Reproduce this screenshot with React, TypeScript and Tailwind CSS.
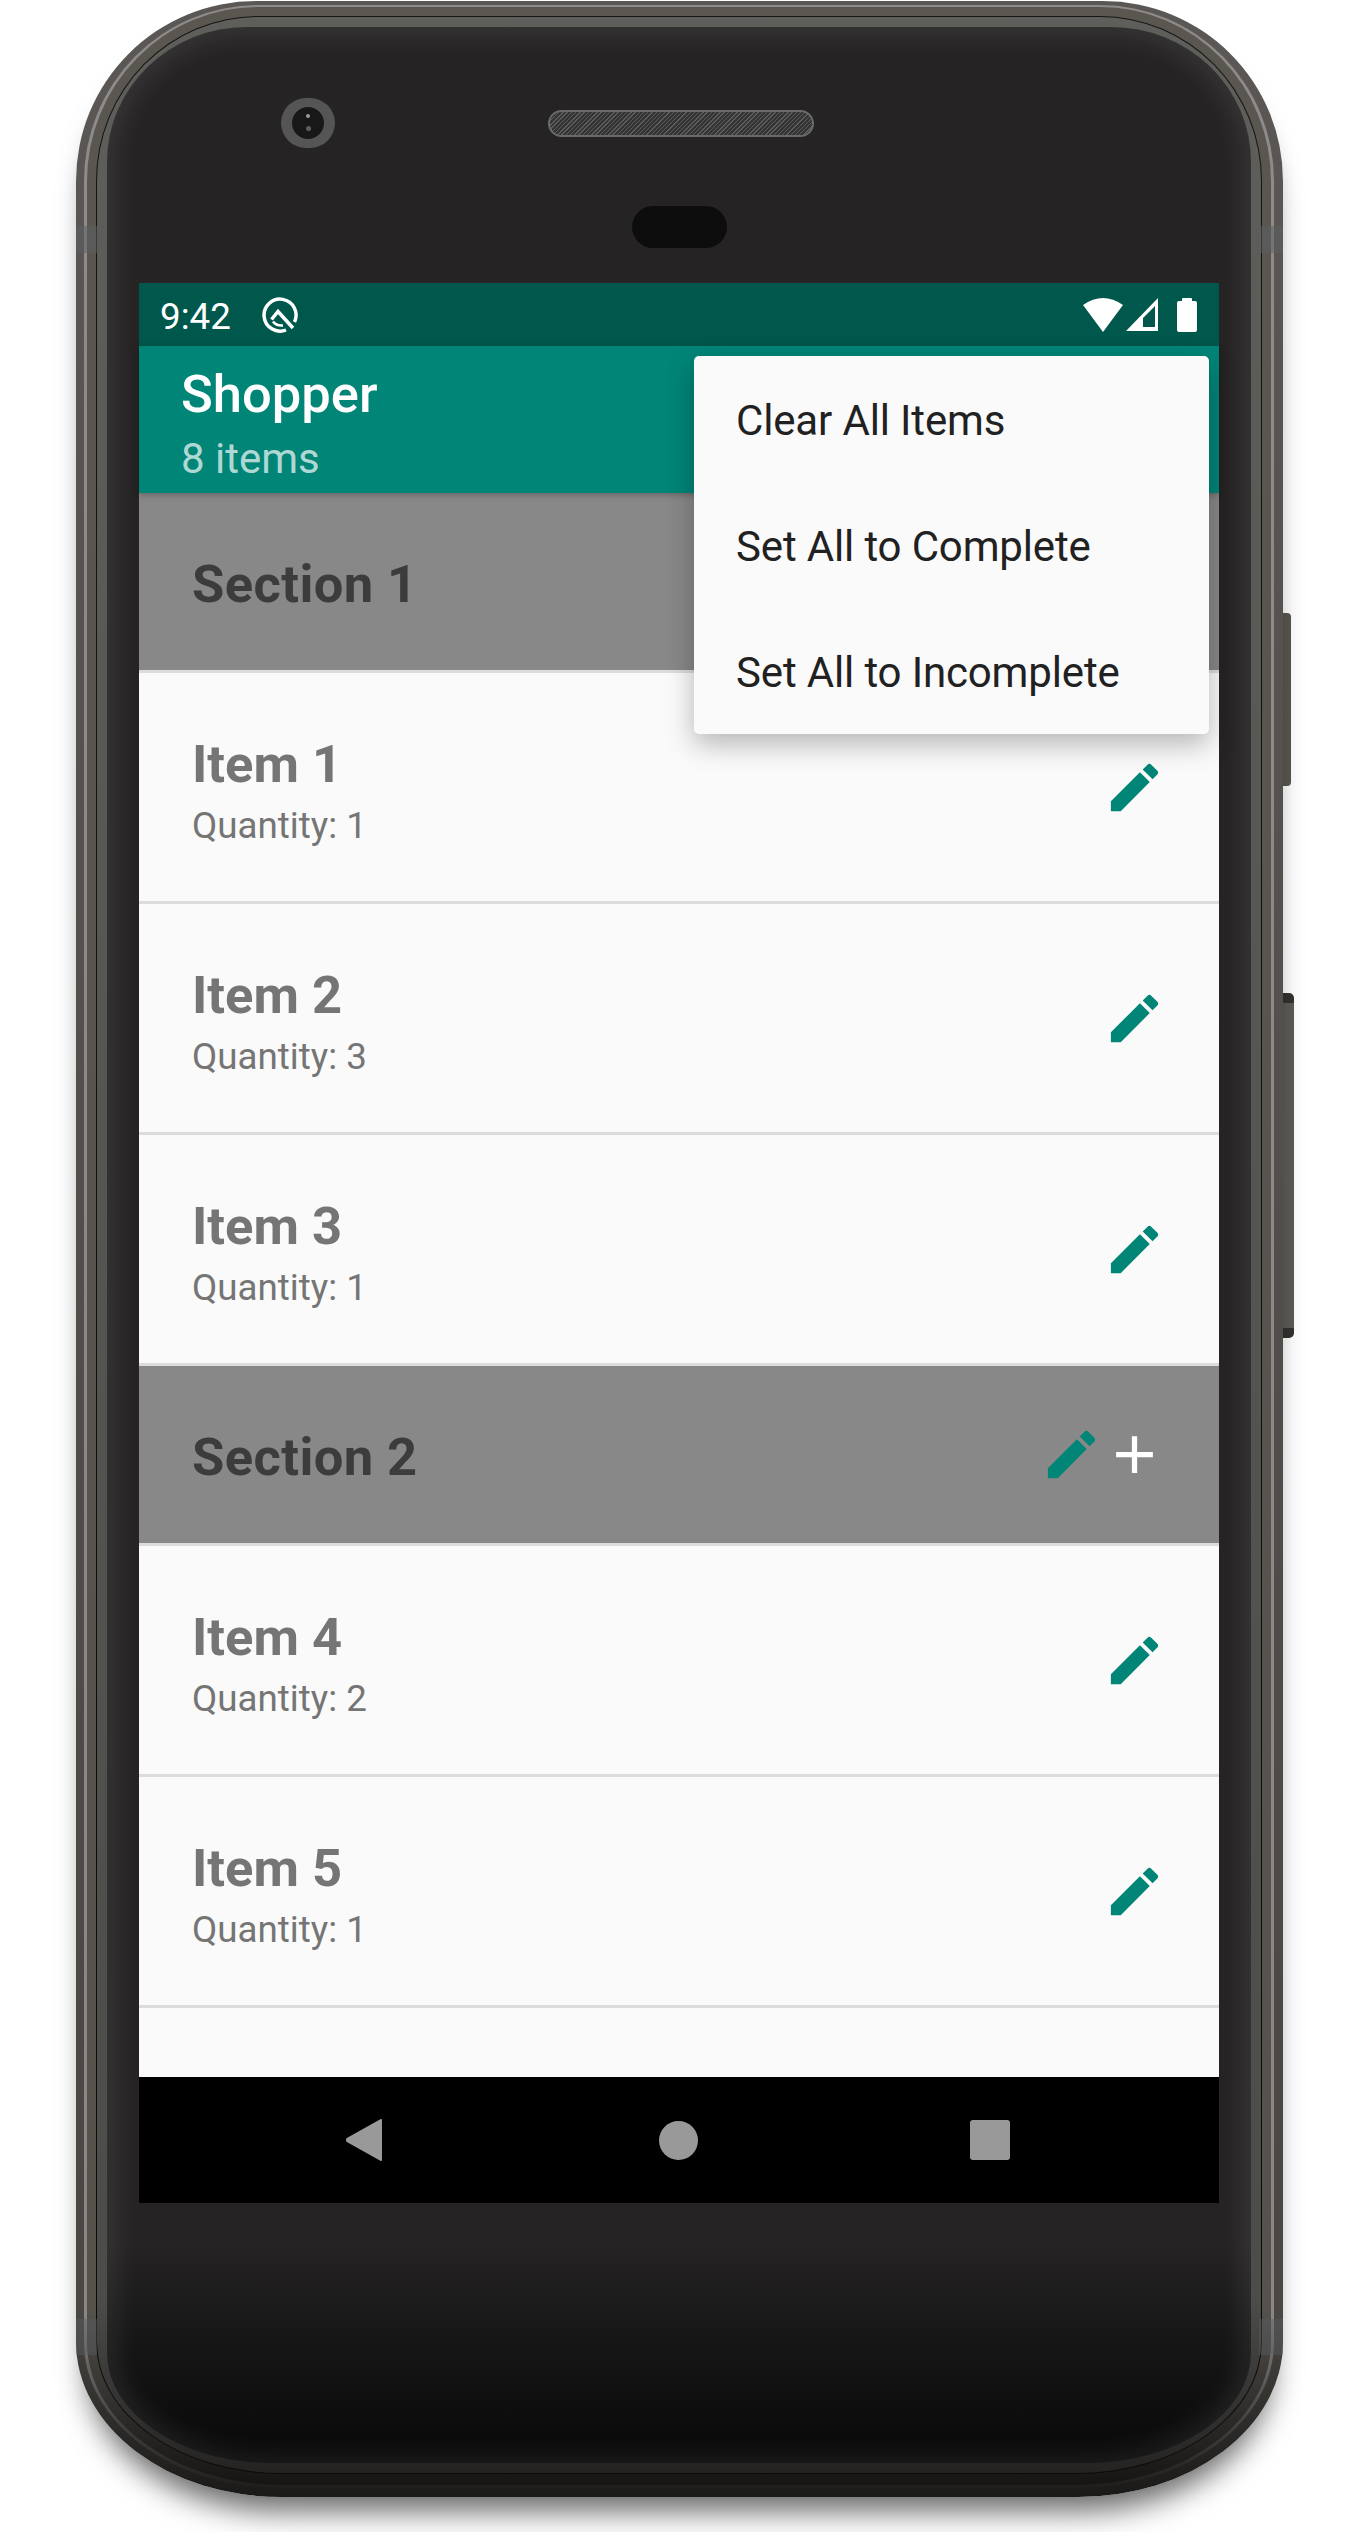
import React from 'react';

const TEAL = '#008577';

const EditIcon = () => (
  <svg width="63" height="63" viewBox="0 0 24 24" fill={TEAL} className="shrink-0">
    <path d="M3 17.25V21h3.75L17.81 9.94l-3.75-3.75L3 17.25zM20.71 7.04c.39-.39.39-1.02 0-1.41l-2.34-2.34c-.39-.39-1.02-.39-1.41 0l-1.83 1.83 3.75 3.75 1.83-1.83z" />
  </svg>
);

const AddIcon = () => (
  <svg width="63" height="63" viewBox="0 0 24 24" fill="#ffffff" className="shrink-0">
    <path d="M19 13h-6v6h-2v-6H5v-2h6V5h2v6h6v2z" />
  </svg>
);

const Section: React.FC<{ title: string }> = ({ title }) => (
  <div className="h-[180px] shrink-0 border-b-[3px] border-[#dcdcdc] bg-[#888888] pl-[53px] pr-[53px] flex items-center justify-between">
    <span className="pt-1 text-[52.5px] leading-[62px] tracking-[0.4px] font-bold text-[#3c3c3c]">{title}</span>
    <div className="flex">
      <EditIcon />
      <AddIcon />
    </div>
  </div>
);

const Item: React.FC<{ name: string; qty: number }> = ({ name, qty }) => (
  <div className="h-[231px] shrink-0 border-b-[3px] border-[#dcdcdc] pl-[53px] pr-[53px] flex items-center justify-between">
    <div className="pt-[7px]">
      <div className="text-[52.5px] leading-[62px] font-bold text-[#757575]">{name}</div>
      <div className="mt-[9px] text-[36.75px] leading-[44px] text-[#757575]">Quantity: {qty}</div>
    </div>
    <EditIcon />
  </div>
);

const StatusBar = () => (
  <div className="h-[63px] shrink-0 bg-[#00574b] pl-[21px] pr-[22px] flex items-center text-white">
    <span className="pt-1 text-[36.75px] leading-[44px]">9:42</span>
    {/* Q beta badge */}
    <svg width="36" height="36" viewBox="0 0 36 36" fill="none" stroke="#ffffff" className="ml-[31px]">
      <path d="M24 33A16 16 0 1 1 32.500 25" strokeWidth="3.5" />
      <path d="M9.5 22.5L16 14.5L31 31" strokeWidth="3.5" />
      <path d="M11 24.500Q14 29 21 28.500" strokeWidth="2.5" />
    </svg>
    <div className="ml-auto flex items-center">
      <svg width="40" height="34" viewBox="0 0 40 34" fill="#ffffff">
        <path d="M0 7Q20-7 40 7L20 34Z" />
      </svg>
      <svg width="32" height="33" viewBox="0 0 32 33" fill="#ffffff" fillRule="evenodd" className="ml-[3px]">
        <path d="M0 33L32 0V33ZM17 29H29V8L17 20Z" />
      </svg>
      <svg width="20" height="34" viewBox="0 0 20 34" fill="#ffffff" className="ml-[19px]">
        <path d="M5 3V1a1 1 0 0 1 1-1h8a1 1 0 0 1 1 1v2h3a2 2 0 0 1 2 2v27a2 2 0 0 1-2 2H2a2 2 0 0 1-2-2V5a2 2 0 0 1 2-2z" />
      </svg>
    </div>
  </div>
);

const menuItems = ['Clear All Items', 'Set All to Complete', 'Set All to Incomplete'];

const Screen = () => (
  <div className="relative w-[1080px] h-[1920px] flex flex-col bg-[#fafafa] font-['Roboto',sans-serif]">
    <StatusBar />
    <div className="relative z-10 h-[147px] shrink-0 bg-[#008577] pl-[42px] pt-[17px] shadow-[0_2px_6px_rgba(0,0,0,0.25)]">
      <div className="text-[52.5px] leading-[62px] font-medium text-white">Shopper</div>
      <div className="mt-[10px] text-[42px] leading-[48px] text-white/70">8 items</div>
    </div>

    <div className="flex-1 flex flex-col overflow-hidden">
      <Section title="Section 1" />
      <Item name="Item 1" qty={1} />
      <Item name="Item 2" qty={3} />
      <Item name="Item 3" qty={1} />
      <Section title="Section 2" />
      <Item name="Item 4" qty={2} />
      <Item name="Item 5" qty={1} />
    </div>

    <div className="h-[126px] shrink-0 bg-black flex items-center">
      <svg width="36" height="42" viewBox="0 0 36 42" fill="#999999" className="ml-[207px]">
        <path d="M36 1v40a1 1 0 0 1-1.7.7L.8 23a3 3 0 0 1 0-4L34.3.3A1 1 0 0 1 36 1z" />
      </svg>
      <div className="ml-[277px] w-[39px] h-[39px] rounded-full bg-[#999999]" />
      <div className="ml-[272px] w-[40px] h-[40px] rounded-[3px] bg-[#999999]" />
    </div>

    {/* overflow menu */}
    <div className="absolute z-20 top-[73px] right-[10px] w-[515px] rounded-[5px] bg-[#fafafa] shadow-[0_10px_28px_rgba(0,0,0,0.28)]">
      {menuItems.map((label) => (
        <div key={label} className="h-[126px] pl-[42px] pt-[2px] flex items-center text-[42px] tracking-[-0.15px] text-[#212121]">
          {label}
        </div>
      ))}
    </div>
  </div>
);

const Bezel = () => (
  <div className="rounded-[140px_140px_165px_165px/135px_135px_110px_110px] bg-gradient-to-b from-[#252324] via-[#252324] via-[91%] to-[#080808] px-[32px] shadow-[inset_0_0_26px_8px_rgba(255,255,255,0.09)]">
    {/* earpiece row */}
    <div className="pt-[71px] flex items-center">
      <div className="ml-[142px] w-[54px] h-[50px] rounded-full bg-[#555555] flex items-center justify-center">
        <div className="relative w-[32px] h-[32px] rounded-full bg-[#181818]">
          <div className="absolute left-[14px] top-[7px] w-[4px] h-[4px] rounded-full bg-[#9a9a9a]" />
          <div className="absolute left-[14px] top-[19px] w-[5px] h-[5px] rounded-full bg-[#5f5f5f]" />
        </div>
      </div>
      <div className="ml-[213px] w-[266px] h-[27px] rounded-full border-2 border-[#6a6a6a] bg-[repeating-linear-gradient(135deg,#5c5c5c_0,#5c5c5c_1px,#343434_1px,#343434_3px)]" />
    </div>
    <div className="mt-[58px] mx-auto w-[95px] h-[42px] rounded-[21px] bg-[#0e0d0e]" />
    <div className="mt-[35px]">
      <Screen />
    </div>
    <div className="h-[260px]" />
  </div>
);

export default function App() {
  return (
    <div className="w-[1370px] h-[2532px] bg-white overflow-hidden pt-px">
      <div className="relative ml-[76px] w-fit">
        {/* side buttons */}
        <div className="absolute left-full top-[612px] w-[8px] h-[173px] rounded-r-[4px] bg-[#5a5751]" />
        <div className="absolute left-full top-[992px] w-[11px] h-[345px] rounded-r-[5px] border-y-[10px] border-[#34322f] bg-[#5f5c56]" />

        {/* metal frame, layer by layer */}
        <div className="relative rounded-[180px_180px_205px_205px/180px_180px_155px_155px] bg-gradient-to-b from-[#5a5754] via-[#4a4743] via-[93%] to-[#1a1918] pl-[8px] pr-[9px] pt-[4px] pb-[9px] shadow-[0_26px_30px_-12px_rgba(0,0,0,0.6)]">
          <div className="rounded-[174px_174px_198px_198px/176px_176px_146px_146px] bg-gradient-to-b from-[#8f8b8b] via-[#8a8686] via-[93%] to-[#1f1e1d] px-[3px] pt-[2px] pb-[3px]">
            <div className="rounded-[171px_171px_195px_195px/174px_174px_143px_143px] bg-gradient-to-b from-[#5a5650] via-[#55514b] via-[93%] to-[#161514] px-[9px] pt-[9px] pb-[11px]">
              <div className="rounded-[162px_162px_186px_186px/165px_165px_132px_132px] bg-gradient-to-b from-[#161514] to-[#0a0a0a] p-px">
                <div className="rounded-[161px_161px_185px_185px/164px_164px_131px_131px] bg-gradient-to-b from-[#5e5e5b] via-[#4c4c49] via-[93%] to-[#242322] p-[10px]">
                  <Bezel />
                </div>
              </div>
            </div>
          </div>
        </div>

        {/* antenna bands */}
        <div className="absolute left-0 top-[225px] w-[21px] h-[27px] bg-[#5b6063]/50" />
        <div className="absolute right-0 top-[225px] w-[24px] h-[27px] bg-[#5b6063]/50" />
        <div className="absolute left-0 top-[2318px] w-[21px] h-[36px] bg-[#5b6063]/40" />
        <div className="absolute right-0 top-[2318px] w-[24px] h-[36px] bg-[#5b6063]/40" />
      </div>
    </div>
  );
}
